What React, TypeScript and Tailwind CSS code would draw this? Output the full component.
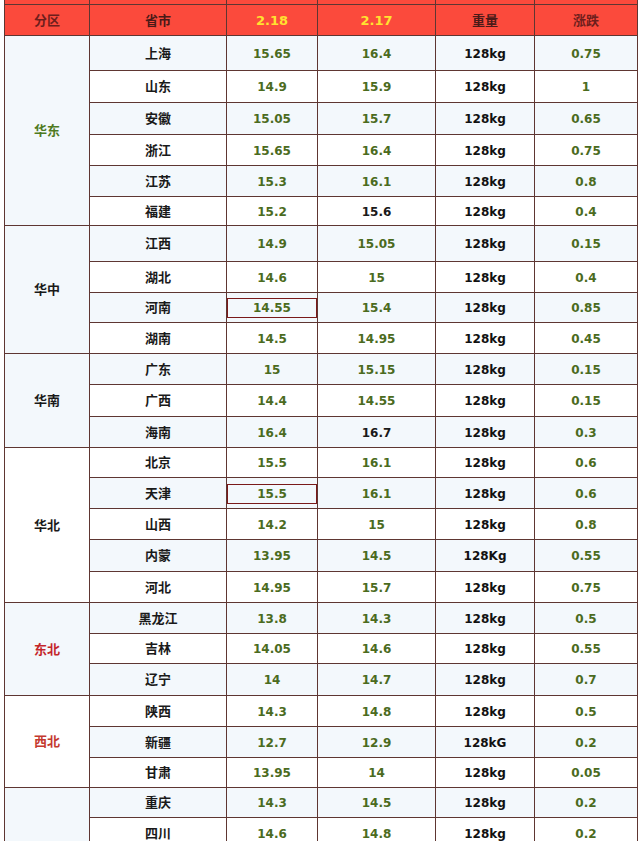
import React from "react";

type Row = { p: string; a: string; b: string; w: string; d: string; h: number; bBlack?: boolean; box?: boolean };
type Group = { z: string; zc: string; rows: Row[] };

const groups: Group[] = [
  {
    z: "华东",
    zc: "text-[#4e7a22]",
    rows: [
      { p: "上海", a: "15.65", b: "16.4", w: "128kg", d: "0.75", h: 35 },
      { p: "山东", a: "14.9", b: "15.9", w: "128kg", d: "1", h: 32 },
      { p: "安徽", a: "15.05", b: "15.7", w: "128kg", d: "0.65", h: 32 },
      { p: "浙江", a: "15.65", b: "16.4", w: "128kg", d: "0.75", h: 31 },
      { p: "江苏", a: "15.3", b: "16.1", w: "128kg", d: "0.8", h: 31 },
      { p: "福建", a: "15.2", b: "15.6", w: "128kg", d: "0.4", h: 29, bBlack: true },
    ],
  },
  {
    z: "华中",
    zc: "text-[#1a1a1a]",
    rows: [
      { p: "江西", a: "14.9", b: "15.05", w: "128kg", d: "0.15", h: 36 },
      { p: "湖北", a: "14.6", b: "15", w: "128kg", d: "0.4", h: 31 },
      { p: "河南", a: "14.55", b: "15.4", w: "128kg", d: "0.85", h: 30, box: true },
      { p: "湖南", a: "14.5", b: "14.95", w: "128kg", d: "0.45", h: 31 },
    ],
  },
  {
    z: "华南",
    zc: "text-[#1a1a1a]",
    rows: [
      { p: "广东", a: "15", b: "15.15", w: "128kg", d: "0.15", h: 31 },
      { p: "广西", a: "14.4", b: "14.55", w: "128kg", d: "0.15", h: 32 },
      { p: "海南", a: "16.4", b: "16.7", w: "128kg", d: "0.3", h: 31, bBlack: true },
    ],
  },
  {
    z: "华北",
    zc: "text-[#1a1a1a]",
    rows: [
      { p: "北京", a: "15.5", b: "16.1", w: "128kg", d: "0.6", h: 30 },
      { p: "天津", a: "15.5", b: "16.1", w: "128kg", d: "0.6", h: 31, box: true },
      { p: "山西", a: "14.2", b: "15", w: "128kg", d: "0.8", h: 31 },
      { p: "内蒙", a: "13.95", b: "14.5", w: "128Kg", d: "0.55", h: 32 },
      { p: "河北", a: "14.95", b: "15.7", w: "128kg", d: "0.75", h: 31 },
    ],
  },
  {
    z: "东北",
    zc: "text-[#c4262a]",
    rows: [
      { p: "黑龙江", a: "13.8", b: "14.3", w: "128kg", d: "0.5", h: 31 },
      { p: "吉林", a: "14.05", b: "14.6", w: "128kg", d: "0.55", h: 30 },
      { p: "辽宁", a: "14", b: "14.7", w: "128kg", d: "0.7", h: 32 },
    ],
  },
  {
    z: "西北",
    zc: "text-[#c4392e]",
    rows: [
      { p: "陕西", a: "14.3", b: "14.8", w: "128kg", d: "0.5", h: 31 },
      { p: "新疆", a: "12.7", b: "12.9", w: "128kG", d: "0.2", h: 31 },
      { p: "甘肃", a: "13.95", b: "14", w: "128kg", d: "0.05", h: 30 },
    ],
  },
  {
    z: "",
    zc: "text-[#1a1a1a]",
    rows: [
      { p: "重庆", a: "14.3", b: "14.5", w: "128kg", d: "0.2", h: 30 },
      { p: "四川", a: "14.6", b: "14.8", w: "128kg", d: "0.2", h: 31 },
    ],
  },
];

const cjk = { fontFamily: '"DejaVu Sans", "Noto Sans CJK SC", sans-serif' };
const cell = "border border-[#5e3632] text-center align-middle px-0 pb-0 pt-[2px] font-bold";

export default function App() {
  let idx = 0;
  return (
    <div className="w-[640px] h-[841px] overflow-hidden bg-white pl-[4px]" style={cjk}>
      <table className="table-fixed border-collapse w-[633px]">
        <colgroup>
          <col className="w-[85px]" />
          <col className="w-[137px]" />
          <col className="w-[91px]" />
          <col className="w-[118px]" />
          <col className="w-[99px]" />
          <col className="w-[103px]" />
        </colgroup>
        <thead>
          <tr className="h-[4px] bg-[#fb4a3c]">
            <td className="border-x border-b border-[#5e3632] p-0"></td>
            <td className="border-x border-b border-[#5e3632] p-0"></td>
            <td className="border-x border-b border-[#5e3632] p-0"></td>
            <td className="border-x border-b border-[#5e3632] p-0"></td>
            <td className="border-x border-b border-[#5e3632] p-0"></td>
            <td className="border-x border-b border-[#5e3632] p-0"></td>
          </tr>
          <tr className="h-[31px] bg-[#fb4a3c]">
            <th className={`${cell} text-[13px] text-[#6e1e1c]`}>分区</th>
            <th className={`${cell} text-[13px] text-[#4a1a18]`}>省市</th>
            <th className={`${cell} text-[13px] text-[#ffe330]`}>2.18</th>
            <th className={`${cell} text-[13px] text-[#ffe330]`}>2.17</th>
            <th className={`${cell} text-[13px] text-[#4a1a18]`}>重量</th>
            <th className={`${cell} text-[13px] text-[#6e1e1c]`}>涨跌</th>
          </tr>
        </thead>
        <tbody>
          {groups.map((g) =>
            g.rows.map((r, i) => {
              const even = idx % 2 === 0;
              idx++;
              const bg = even ? "bg-[#f3f8fc]" : "bg-white";
              return (
                <tr key={r.p} className={bg} style={{ height: r.h }}>
                  {i === 0 && (
                    <td rowSpan={g.rows.length} className={`${cell} text-[13px] ${g.zc}`}>
                      {g.z}
                    </td>
                  )}
                  <td className={`${cell} text-[13px] text-[#1a1a1a]`}>{r.p}</td>
                  <td className={`${cell} text-[12px] text-[#4b6b1e]`}>
                    {r.box ? (
                      <div className="border border-[#7a1a1a] h-[20px] leading-[18px]">{r.a}</div>
                    ) : (
                      r.a
                    )}
                  </td>
                  <td className={`${cell} text-[12px] ${r.bBlack ? "text-[#1a1a1a]" : "text-[#4b6b1e]"}`}>{r.b}</td>
                  <td className={`${cell} text-[12px] text-[#111111]`}>{r.w}</td>
                  <td className={`${cell} text-[12px] text-[#4b6b1e]`}>{r.d}</td>
                </tr>
              );
            })
          )}
        </tbody>
      </table>
    </div>
  );
}
